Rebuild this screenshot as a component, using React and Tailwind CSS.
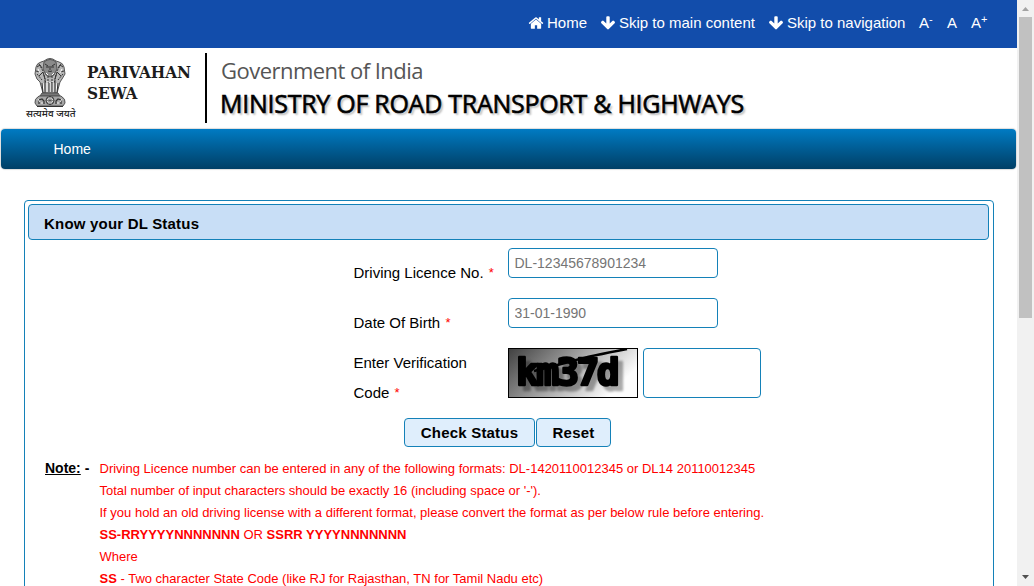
import React from "react";

const HOME = "M1472 992v480q0 26-19 45t-45 19h-384v-384h-256v384h-384q-26 0-45-19t-19-45v-480q0-1 .5-3t.5-3l575-474 575 474q1 2 1 6zm223-69l-62 74q-8 9-21 11h-3q-13 0-21-7l-692-577-692 577q-12 8-24 7-13-2-21-11l-62-74q-8-10-7-23.500t11-21.500l719-599q32-26 76-26t76 26l244 204v-195q0-14 9-23t23-9h192q14 0 23 9t9 23v408l219 182q10 8 11 21.500t-7 23.500z";
const DOWN = "M1675 832q0 53-37 90l-651 652q-39 37-91 37-53 0-90-37l-651-652q-38-36-38-90 0-53 38-91l74-75q39-37 91-37 53 0 90 37l294 294v-704q0-52 38-90t90-38h128q52 0 90 38t38 90v704l294-294q37-37 90-37 52 0 91 37l75 75q37 39 37 91z";

function Glyph({ d }) {
  return (
    <svg className="relative -top-px h-4 w-4 shrink-0" viewBox="0 0 1792 1792" fill="currentColor">
      <path d={d} />
    </svg>
  );
}

function Emblem() {
  return (
    <svg className="h-[50px] w-8" viewBox="0 0 32 50" fill="none" stroke="#555" strokeWidth="1">
      <path fill="#b5b5b5" d="M10 3q6-5 12 0l3 1q4 1 5 5l1 7-3 5-2 3-3 11H9L6 24l-3-3-2-5 1-7q1-4 5-5z" />
      <path fill="#8a8a8a" d="M10 4q6-5 12 0l1 7-3 6-4 2-4-2-3-6z" />
      <path stroke="#333" d="M11 6l3 2M21 6l-3 2M12 9h3M17 9h3M14 13q2 1 4 0M16 8v4M3 9l3-2 2 3M29 9l-3-2-2 3M2 13l4 1M30 13l-4 1M5 18l4-4 2 7M27 18l-4-4-2 7" />
      <path stroke="#333" strokeDasharray="2 1" d="M5 6l4 7M27 6l-4 7M3 16l5 6M29 16l-5 6M10 17l2 8M22 17l-2 8M14 18v7M18 18v7" />
      <path stroke="#fff" d="M9 25l1 9M13 23v11M16 24v10M19 23v11M23 25l-1 9M4 11l2 4M28 11l-2 4M12 15l2 2M20 15l-2 2" />
      <path stroke="#333" d="M8 25l1 10M11 22v13M15 25v9M18 24v10M21 22v13M24 25l-1 10" />
      <path fill="#777" d="M8 35h16l2 3H6z" />
      <path fill="#a5a5a5" d="M5 38q-5 3-4 7l2 3h26l2-3q1-4-4-7z" />
      <circle cx="16" cy="42.500" r="4" fill="#ddd" stroke="#333" />
      <path stroke="#444" d="M16 39v7M12 42.500h8M13 40l6 5M19 40l-6 5" strokeWidth=".6" />
      <path stroke="#333" strokeWidth="1.2" d="M5 46v-4l3-1 2 2v3M27 46v-4l-3-1-2 2v3M3 48.500h26" />
      <path stroke="#eee" d="M4 41l2 3M8 44v2M28 41l-2 3M24 44v2" />
    </svg>
  );
}

function Captcha() {
  return (
    <svg className="h-[50px] w-[130px]" viewBox="0 0 130 50">
      <defs>
        <linearGradient id="cap" x1="0" y1="0" x2="1" y2="0.38">
          <stop offset="0" stopColor="#404040" />
          <stop offset="1" stopColor="#fcfcfc" />
        </linearGradient>
      </defs>
      <rect x=".5" y=".5" width="129" height="49" fill="url(#cap)" stroke="#000" />
      <text
        className="[filter:drop-shadow(5px_5px_1px_rgba(0,0,0,0.32))]"
        x="8" y="36.500" fontFamily="'DejaVu Sans Mono', monospace" fontWeight="700" fontSize="38"
        letterSpacing="-2.700" fill="#000" stroke="#000" strokeWidth="2.500" strokeLinejoin="round"
      >km37d</text>
      <path d="M26 23Q50 17 66 12.500T119 1" fill="none" stroke="#000" strokeWidth="2.500" />
    </svg>
  );
}

const Star = () => <span className="relative -top-px ml-px text-[13px] text-[#ff0000]">*</span>;

const field = "block rounded border border-[#1481b8] bg-white outline-none placeholder:text-[#757575] placeholder:opacity-100";
const button = "h-[29px] rounded border border-[#1481b8] bg-[#dfeefc] pb-px text-[15px] leading-[27px] font-bold tracking-[0.2px]";

export default function App() {
  return (
    <div className="flex h-[586px] w-[1034px] overflow-hidden bg-white font-['Liberation_Sans',Arial,sans-serif] text-[15px] text-black">
      <div className="flex h-full w-[1017px] shrink-0 flex-col overflow-hidden">
        <div className="flex h-12 shrink-0 items-center bg-[#124dab] pb-px pl-[528px] whitespace-nowrap text-white">
          <a className="flex w-[72px] items-center gap-[3px]"><Glyph d={HOME} />Home</a>
          <a className="flex w-[168px] items-center gap-[3px]"><Glyph d={DOWN} />Skip to main content</a>
          <a className="flex w-[151px] items-center gap-[3px]"><Glyph d={DOWN} />Skip to navigation</a>
          <a className="w-[28px]">A<sup className="text-[11px]">-</sup></a>
          <a className="w-[24px]">A</a>
          <a>A<sup className="text-[11px]">+</sup></a>
        </div>

        <header className="flex h-[81px] shrink-0 pt-[5px]">
          <div className="flex w-[75px] flex-col pl-[26px] pt-[5px]">
            <div className="pl-2"><Emblem /></div>
            <div className="text-[10px] leading-[11px] font-medium whitespace-nowrap text-[#222] font-['Noto_Sans','Noto_Sans_Devanagari',sans-serif]">सत्यमेव जयते</div>
          </div>
          <div className="w-[118px] pl-3 pt-[9px] font-['DejaVu_Serif_Condensed','DejaVu_Serif',serif] text-[17px] font-bold leading-[21px] tracking-[-0.1px] text-[#1c1c1c]">
            PARIVAHAN<br />SEWA
          </div>
          <div className="ml-[12px] h-[70px] w-[2px] bg-black" />
          <div className="ml-[14px] font-['Open_Sans',sans-serif] whitespace-nowrap">
            <div className="h-[34px] pt-px text-[22px] leading-[32px] tracking-[-0.53px] text-[#555]">Government of India</div>
            <div className="-ml-px text-[25px] leading-[33px] tracking-[-0.27px] text-black [-webkit-text-stroke:0.6px_#000] [text-shadow:2px_2px_2px_#bbb]">MINISTRY OF ROAD TRANSPORT &amp; HIGHWAYS</div>
          </div>
        </header>

        <nav className="mx-px h-10 w-[1015px] shrink-0 rounded bg-linear-to-b from-[#007bc3] to-[#003f66] pl-[52.5px] text-[14px] leading-10 text-white shadow-[0_0_1px_1px_#ddd]">Home</nav>

        <main className="mt-[31px] ml-6 flex h-[500px] w-[970px] shrink-0 flex-col rounded border border-[#1481b8] p-[3px]">
          <h1 className="h-9 w-[961px] rounded border border-[#1481b8] bg-[#c8def6] pl-[15px] text-[15px] font-bold leading-[37px] tracking-[0.2px]">Know your DL Status</h1>

          <form className="mt-2 ml-[325px] grid grid-cols-[155px_260px]">
            <label className="h-[50px] pt-[10px] pl-[0.5px] leading-[30px] whitespace-nowrap">Driving Licence No. <Star /></label>
            <input className={`${field} h-[30px] w-[210px] px-[5.5px] text-[14px]`} placeholder="DL-12345678901234" />
            <label className="h-[50px] pt-[10px] pl-[0.5px] leading-[30px]">Date Of Birth <Star /></label>
            <input className={`${field} h-[30px] w-[210px] px-[5.5px] text-[14px]`} placeholder="31-01-1990" />
            <label className="h-[70px] pl-[0.5px] leading-[30px]">Enter Verification<br />Code <Star /></label>
            <div className="flex gap-[5px]"><Captcha /><input className={`${field} h-[50px] w-[118px]`} /></div>
          </form>
          <div className="ml-[376px] flex gap-px">
            <button className={`${button} w-[131px]`}>Check Status</button>
            <button className={`${button} w-[75px]`}>Reset</button>
          </div>
          <section className="mt-[11px] ml-[17px] flex text-[13px] leading-[22px] whitespace-nowrap">
            <div className="-mt-px w-[54.5px] text-[14px] font-bold"><span className="underline">Note:</span> -</div>
            <div className="text-[#ff0000]">
              <p>Driving Licence number can be entered in any of the following formats: DL-1420110012345 or DL14 20110012345</p>
              <p>Total number of input characters should be exactly 16 (including space or '-').</p>
              <p>If you hold an old driving license with a different format, please convert the format as per below rule before entering.</p>
              <p><b>SS-RRYYYYNNNNNNN</b> OR <b>SSRR YYYYNNNNNNN</b></p>
              <p>Where</p>
              <p><b>SS</b> - Two character State Code (like RJ for Rajasthan, TN for Tamil Nadu etc)</p>
            </div>
          </section>
        </main>
      </div>
      <div className="flex h-full w-[17px] shrink-0 flex-col items-center justify-between bg-[#f1f1f1] pb-[7px]">
        <div className="flex flex-col items-center">
          <svg className="h-[17px] w-[13px]" viewBox="0 0 13 17"><path d="M3 11L6.500 7L10 11z" fill="#a3a3a3" /></svg>
          <div className="h-[301px] w-[13px] bg-[#c1c1c1]" />
        </div>
        <svg className="h-1 w-[7px]" viewBox="0 0 7 4"><path d="M0 0h7L3.500 4z" fill="#505050" /></svg>
      </div>
    </div>
  );
}
